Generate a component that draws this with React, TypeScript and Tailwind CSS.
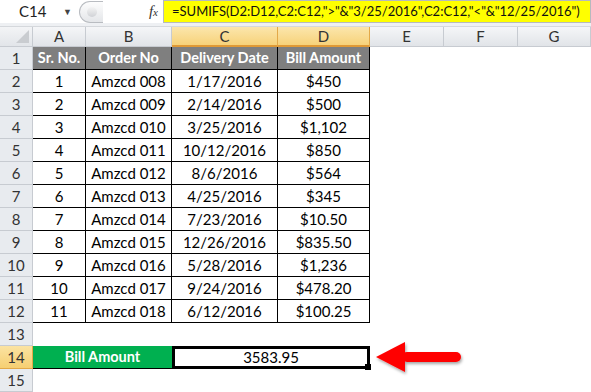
const rows = [
  ["1", "Amzcd 008", "1/17/2016", "$450"],
  ["2", "Amzcd 009", "2/14/2016", "$500"],
  ["3", "Amzcd 010", "3/25/2016", "$1,102"],
  ["4", "Amzcd 011", "10/12/2016", "$850"],
  ["5", "Amzcd 012", "8/6/2016", "$564"],
  ["6", "Amzcd 013", "4/25/2016", "$345"],
  ["7", "Amzcd 014", "7/23/2016", "$10.50"],
  ["8", "Amzcd 015", "12/26/2016", "$835.50"],
  ["9", "Amzcd 016", "5/28/2016", "$1,236"],
  ["10", "Amzcd 017", "9/24/2016", "$478.20"],
  ["11", "Amzcd 018", "6/12/2016", "$100.25"],
];

const cols = ["A", "B", "C", "D", "E", "F", "G"];
const font = { fontFamily: "Lato, 'Liberation Sans', sans-serif" };

function RowHead({ n, active }: { n: number; active?: boolean }) {
  return (
    <div
      className={
        "flex h-[23px] items-center justify-center border-b border-r text-[15px] text-[#333] " +
        (active
          ? "border-[#e3a948] bg-[linear-gradient(180deg,#fbe3a2,#f6cf72)]"
          : "border-[#c7cbd1] bg-[#e8ebef]")
      }
    >
      {n}
    </div>
  );
}

export default function App() {
  return (
    <div className="relative h-[392px] w-[591px] overflow-hidden whitespace-nowrap bg-white" style={font}>
      {/* formula bar */}
      <div className="flex h-[27px] border-b border-[#d5d8dc] bg-[#eef0f3] pb-[3px]">
        <div className="flex w-[78px] items-center justify-between bg-white pl-[19px] pr-[6px] text-[15px] text-[#222]">
          <span>C14</span>
          <span className="text-[9px] text-[#444]">▼</span>
        </div>
        <div className="flex w-[85px] items-center bg-white">
          <div className="ml-[1px] flex h-[22px] w-[24px] items-center justify-center rounded-l-full border border-r-0 border-[#b9bcc1] bg-[linear-gradient(180deg,#fdfdfd,#e4e6e9)]">
            <div className="h-[10px] w-[10px] rounded-full bg-[linear-gradient(180deg,#f4f4f4,#d0d2d6)]" />
          </div>
          <div className="flex-1" />
          <span
            className="mr-[5px] text-[15px] italic text-[#333]"
            style={{ fontFamily: "'Liberation Serif', serif" }}
          >
            f<span className="text-[11px]">x</span>
          </span>
        </div>
        <div className="flex min-w-0 flex-1 items-center overflow-hidden border border-[#b6b9be] bg-[#ffff00] pl-[8px] text-[13px] text-[#111]">
          =SUMIFS(D2:D12,C2:C12,"&gt;"&amp;"3/25/2016",C2:C12,"&lt;"&amp;"12/25/2016")
        </div>
      </div>

      {/* sheet */}
      <div className="grid grid-cols-[33px_53px_86px_106px_92px_74px_74px_1fr]">
        {/* column headers */}
        <div className="relative h-[20px] border-b border-r border-[#c7cbd1] bg-[linear-gradient(180deg,#f3f4f6,#e2e5e9)]">
          <div className="absolute bottom-[3px] right-[3px] h-0 w-0 border-b-[13px] border-l-[13px] border-b-[#c9ccd0] border-l-transparent" />
        </div>
        {cols.map((c) => {
          const active = c === "C" || c === "D";
          return (
            <div
              key={c}
              className={
                "flex h-[20px] items-center justify-center border-r text-[15px] text-[#333] " +
                (active
                  ? "border-b-2 border-[#e3a948] border-b-[#e09a36] bg-[linear-gradient(180deg,#fbe6ac,#f7d27a)]"
                  : "border-b border-[#c7cbd1] bg-[linear-gradient(180deg,#f5f6f8,#e1e4e8)]")
              }
            >
              {c}
            </div>
          );
        })}

        {/* row 1 */}
        <RowHead n={1} />
        {["Sr. No.", "Order No", "Delivery Date", "Bill Amount"].map((h) => (
          <div
            key={h}
            className="flex h-[23px] items-center justify-center border-b border-r border-black bg-[#7f7f7f] text-[14.5px] font-bold text-white"
          >
            {h}
          </div>
        ))}
        <div className="col-span-3 h-[23px]" />

        {rows.map((r, i) => (
          <div key={i} className="contents">
            <RowHead n={i + 2} />
            {r.map((v, j) => (
              <div
                key={j}
                className="flex h-[23px] items-center justify-center border-b border-r border-black text-[15px] text-black"
              >
                {v}
              </div>
            ))}
            <div className="col-span-3 h-[23px]" />
          </div>
        ))}

        <RowHead n={13} />
        <div className="col-span-7 h-[23px]" />

        <RowHead n={14} active />
        <div className="col-span-2 flex h-[23px] items-center justify-center border-b border-black bg-[#00b050] text-[14.5px] font-bold text-white">
          Bill Amount
        </div>
        <div className="relative col-span-2 flex h-[23px] items-center justify-center border-[3px] border-black text-[15px] text-black">
          3583.95
          <div className="absolute -bottom-[4px] -right-[4px] h-[6px] w-[6px] bg-black" />
        </div>
        <div className="col-span-3 h-[23px]" />

        <RowHead n={15} />
        <div className="col-span-7 h-[23px]" />
      </div>

      {/* arrow */}
      <svg
        className="absolute left-[372px] top-[338px]"
        width="100"
        height="40"
        viewBox="0 0 100 40"
      >
        <defs>
          <filter id="sh" x="-20%" y="-30%" width="140%" height="170%">
            <feDropShadow dx="1" dy="2" stdDeviation="1.5" floodColor="#000" floodOpacity="0.35" />
          </filter>
        </defs>
        <g filter="url(#sh)">
          <path d="M4 19 L33 4 L33 34 Z" fill="#ff0000" />
          <rect x="30" y="14" width="59" height="10" rx="5" fill="#ff0000" />
        </g>
      </svg>
    </div>
  );
}
